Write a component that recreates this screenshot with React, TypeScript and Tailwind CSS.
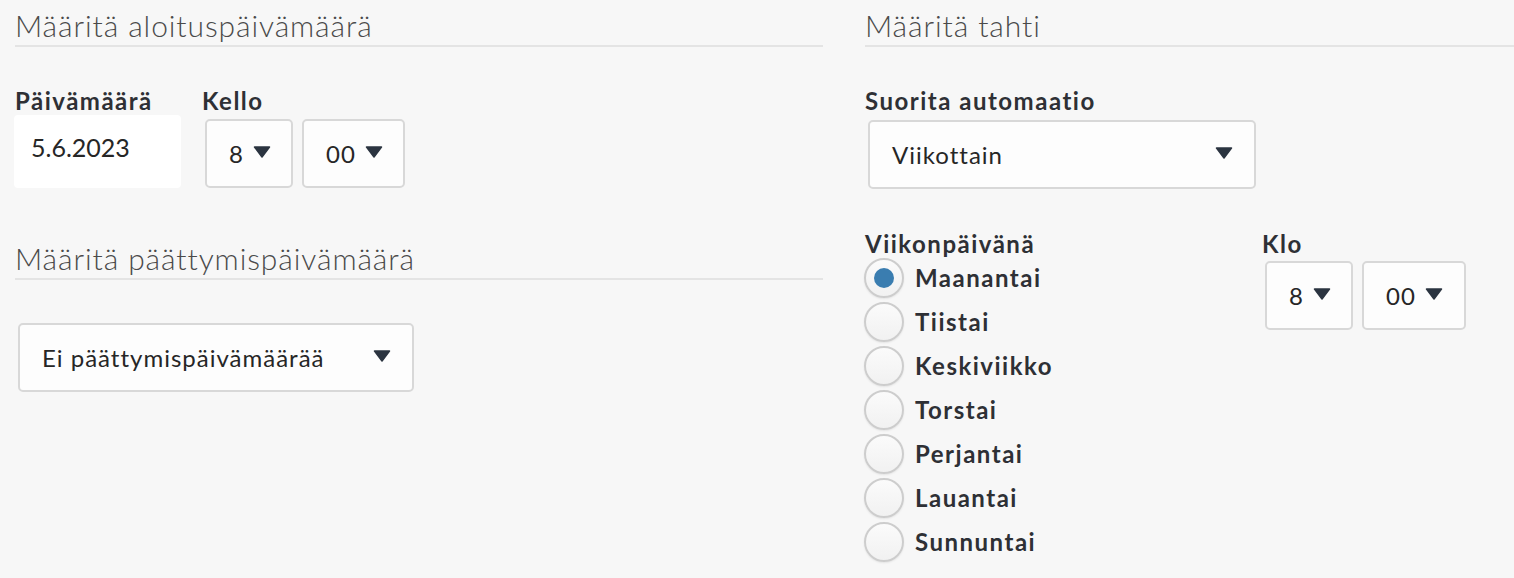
import React from "react";

const Arrow = () => (
  <svg width="18" height="12" viewBox="0 0 18 12" className="shrink-0 -translate-y-[2px]">
    <path d="M1.5 1 H16.5 L9 11 Z" fill="#2b3440" stroke="#2b3440" strokeWidth="1.5" strokeLinejoin="round" />
  </svg>
);

const SmallSelect = ({ value, w }: { value: string; w: string }) => (
  <div className={`${w} h-[69px] flex items-center pl-[22px] gap-[9px] bg-[#fdfdfd] border-2 border-[#d8d8d8] rounded-[5px] text-[24px] tracking-[1px] text-[#262626]`}>
    <span>{value}</span>
    <Arrow />
  </div>
);

const WideSelect = ({ value, w }: { value: string; w: string }) => (
  <div className={`${w} h-[69px] flex items-center justify-between pl-[22px] pr-[21px] bg-[#fdfdfd] border-2 border-[#d8d8d8] rounded-[5px] text-[24px] tracking-[1px] text-[#262626]`}>
    <span>{value}</span>
    <Arrow />
  </div>
);

const Heading = ({ children }: { children: React.ReactNode }) => (
  <div className="pt-[7px] pb-[2px] border-b-2 border-[#e4e4e4] text-[30px] leading-[36px] font-light tracking-[0.9px] text-[#4a4a4a]">
    {children}
  </div>
);

const Label = ({ children }: { children: React.ReactNode }) => (
  <div className="text-[24px] leading-[28px] font-bold tracking-[1.5px] text-[#2e3035]">{children}</div>
);

const Radio = ({ label, checked }: { label: string; checked?: boolean }) => (
  <div className="h-[44px] flex items-center">
    <div className="w-[40px] h-[40px] rounded-full border-2 border-[#cdcdcd] bg-gradient-to-b from-[#fbfbfb] to-[#f1f1f1] shadow-[0_1px_2px_rgba(0,0,0,0.08)] flex items-center justify-center">
      {checked && <div className="w-[20px] h-[20px] rounded-full bg-[#3a7db0]" />}
    </div>
    <span className="ml-[11px] text-[24px] font-bold tracking-[1.5px] text-[#2e3035]">{label}</span>
  </div>
);

export default function App() {
  return (
    <div className="w-[1514px] h-[578px] overflow-hidden bg-[#f7f7f7] flex" style={{ fontFamily: "Lato, 'Noto Sans', sans-serif" }}>
      <div className="w-[808px] ml-[15px] shrink-0">
        <Heading>Määritä aloituspäivämäärä</Heading>
        <div className="mt-[40px] flex">
          <div className="w-[187px] flex flex-col">
            <Label>Päivämäärä</Label>
            <div className="w-[167px] h-[73px] -ml-[1px] bg-white rounded-[4px] pl-[17px] pt-[17px] text-[25px] leading-[30px] text-[#262626]">
              5.6.2023
            </div>
          </div>
          <div className="flex flex-col">
            <Label>Kello</Label>
            <div className="flex gap-[9px] ml-[3px] mt-[4px]">
              <SmallSelect value="8" w="w-[88px]" />
              <SmallSelect value="00" w="w-[103px]" />
            </div>
          </div>
        </div>
        <div className="mt-[45px]">
          <Heading>Määritä päättymispäivämäärä</Heading>
        </div>
        <div className="mt-[43px] ml-[3px]">
          <WideSelect value="Ei päättymispäivämäärää" w="w-[396px]" />
        </div>
      </div>
      <div className="ml-[42px] flex-1">
        <Heading>Määritä tahti</Heading>
        <div className="mt-[40px]">
          <Label>Suorita automaatio</Label>
          <div className="ml-[3px] mt-[5px]">
            <WideSelect value="Viikottain" w="w-[388px]" />
          </div>
        </div>
        <div className="mt-[41px] flex">
          <div className="w-[397px]">
            <Label>Viikonpäivänä</Label>
            <div className="-ml-[1px] -mt-[2px]">
              <Radio label="Maanantai" checked />
              <Radio label="Tiistai" />
              <Radio label="Keskiviikko" />
              <Radio label="Torstai" />
              <Radio label="Perjantai" />
              <Radio label="Lauantai" />
              <Radio label="Sunnuntai" />
            </div>
          </div>
          <div>
            <Label>Klo</Label>
            <div className="flex gap-[9px] ml-[3px] mt-[3px]">
              <SmallSelect value="8" w="w-[88px]" />
              <SmallSelect value="00" w="w-[104px]" />
            </div>
          </div>
        </div>
      </div>
    </div>
  );
}
